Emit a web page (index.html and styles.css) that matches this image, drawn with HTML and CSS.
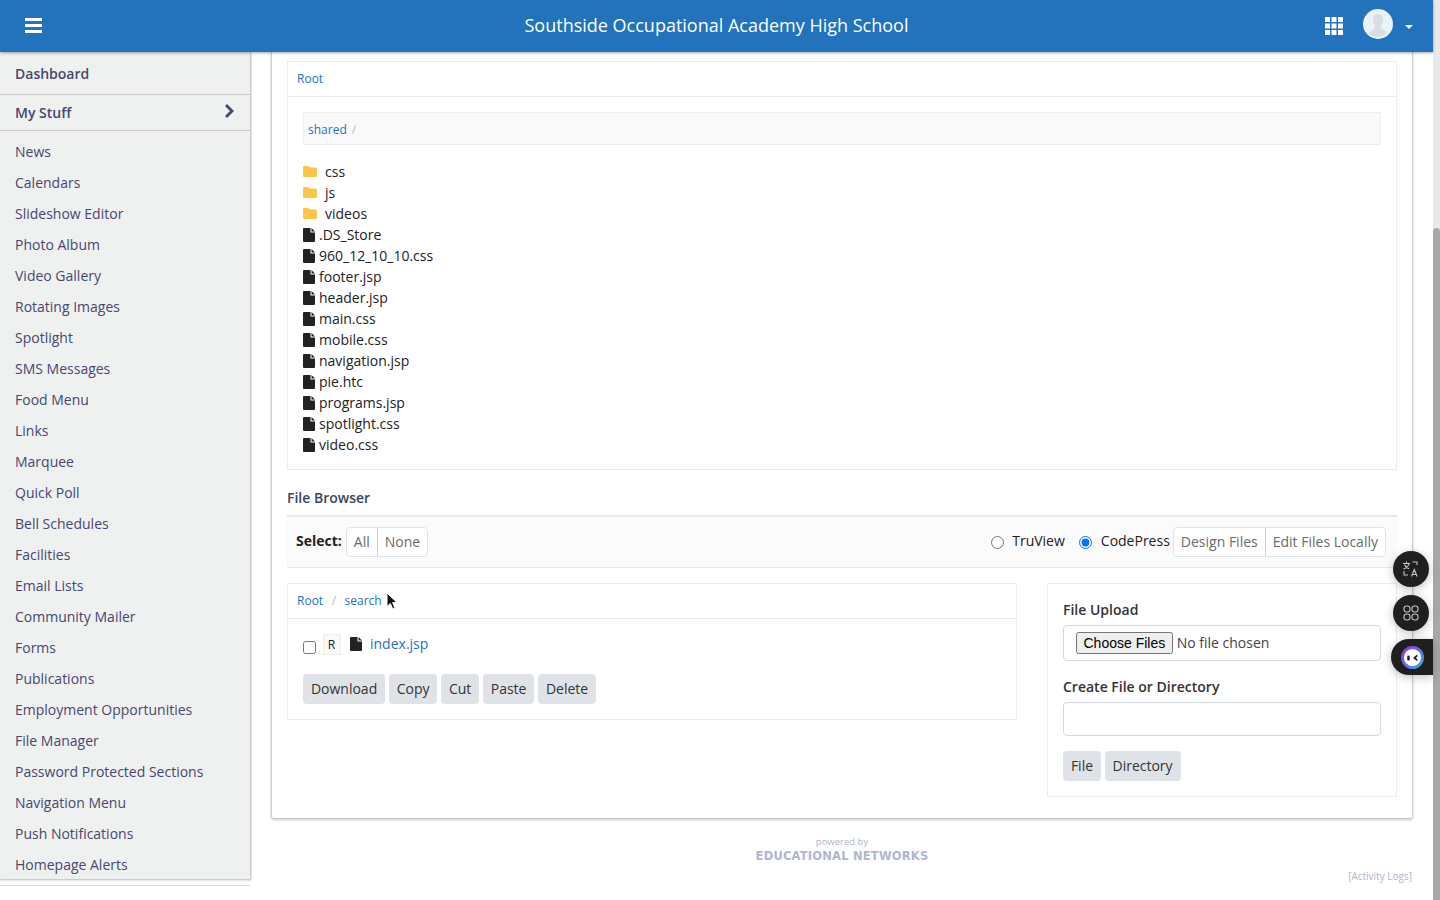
FILE: index.html
```html
<!DOCTYPE html>
<html lang="en">
<head>
  <meta charset="UTF-8" />
  <title>File Manager - Southside Occupational Academy High School</title>
  <link rel="stylesheet" href="styles.css">
</head>
<body>
  <div class="page">
    <header class="topbar">
      <svg class="menu-icon" viewBox="0 0 17 15"><path d="M0 0h17v3H0zM0 6h17v3H0zM0 12h17v3H0z"/></svg>
      <div class="site-title">Southside Occupational Academy High School</div>
      <svg class="apps-icon" viewBox="0 0 18 18"><path d="M0 0h5v5H0zM6.500 0h5v5h-5zM13 0h5v5h-5zM0 6.500h5v5H0zM6.500 6.500h5v5h-5zM13 6.500h5v5h-5zM0 13h5v5H0zM6.500 13h5v5h-5zM13 13h5v5h-5z"/></svg>
      <svg class="avatar" viewBox="0 0 30 30">
        <circle cx="15" cy="15" r="15" fill="#ecf0f7"/>
        <path d="M15 5c3.300 0 5 2.600 5 6 0 2.400-.9 4.400-2 5.600v2c0 1.500 2.500 2.400 5 4 .9.600 1 1.300 1 2A14 14 0 0 1 6 24.600c0-.7.100-1.400 1-2 2.500-1.600 5-2.500 5-4v-2c-1.100-1.200-2-3.200-2-5.600 0-3.400 1.700-6 5-6z" fill="#d9dee6"/>
      </svg>
      <span class="caret"></span>
    </header>

    <div class="layout">
      <div class="side-col">
        <nav class="sidebar">
          <a class="nav-head nav-dash">Dashboard</a>
          <a class="nav-head nav-stuff">My Stuff
            <svg class="chev" viewBox="0 0 9 14"><path d="M2 0l7 7-7 7-2-2 5-5-5-5z"/></svg>
          </a>
          <ul class="nav-list">
            <li>News</li>
            <li>Calendars</li>
            <li>Slideshow Editor</li>
            <li>Photo Album</li>
            <li>Video Gallery</li>
            <li>Rotating Images</li>
            <li>Spotlight</li>
            <li>SMS Messages</li>
            <li>Food Menu</li>
            <li>Links</li>
            <li>Marquee</li>
            <li>Quick Poll</li>
            <li>Bell Schedules</li>
            <li>Facilities</li>
            <li>Email Lists</li>
            <li>Community Mailer</li>
            <li>Forms</li>
            <li>Publications</li>
            <li>Employment Opportunities</li>
            <li>File Manager</li>
            <li>Password Protected Sections</li>
            <li>Navigation Menu</li>
            <li>Push Notifications</li>
            <li>Homepage Alerts</li>
          </ul>
        </nav>
        <div class="side-rule"></div>
      </div>

      <main class="content">
        <section class="panel">
          <div class="box">
            <div class="box-head"><a>Root</a></div>
            <div class="box-body">
              <div class="crumb"><a>shared</a><span class="sep">/</span></div>
              <ul class="files">
                <li class="dir"><svg class="folder" viewBox="0 0 14 11"><path d="M1.300 0h4l1.400 1.600h6c.7 0 1.300.6 1.300 1.300v6.800c0 .7-.6 1.300-1.300 1.300H1.300C.6 11 0 10.400 0 9.700V1.300C0 .6.600 0 1.300 0z"/></svg>css</li>
                <li class="dir"><svg class="folder" viewBox="0 0 14 11"><path d="M1.300 0h4l1.400 1.600h6c.7 0 1.300.6 1.300 1.300v6.800c0 .7-.6 1.300-1.300 1.300H1.300C.6 11 0 10.400 0 9.700V1.300C0 .6.600 0 1.300 0z"/></svg>js</li>
                <li class="dir"><svg class="folder" viewBox="0 0 14 11"><path d="M1.300 0h4l1.400 1.600h6c.7 0 1.300.6 1.300 1.300v6.800c0 .7-.6 1.300-1.300 1.300H1.300C.6 11 0 10.400 0 9.700V1.300C0 .6.600 0 1.300 0z"/></svg>videos</li>
                <li><svg class="file" viewBox="0 0 12 14"><path d="M1 0h6.500v4.500H12V13a1 1 0 0 1-1 1H1a1 1 0 0 1-1-1V1a1 1 0 0 1 1-1zM8.500 0L12 3.500H8.500z"/></svg>.DS_Store</li>
                <li><svg class="file" viewBox="0 0 12 14"><path d="M1 0h6.500v4.500H12V13a1 1 0 0 1-1 1H1a1 1 0 0 1-1-1V1a1 1 0 0 1 1-1zM8.500 0L12 3.500H8.500z"/></svg>960_12_10_10.css</li>
                <li><svg class="file" viewBox="0 0 12 14"><path d="M1 0h6.500v4.500H12V13a1 1 0 0 1-1 1H1a1 1 0 0 1-1-1V1a1 1 0 0 1 1-1zM8.500 0L12 3.500H8.500z"/></svg>footer.jsp</li>
                <li><svg class="file" viewBox="0 0 12 14"><path d="M1 0h6.500v4.500H12V13a1 1 0 0 1-1 1H1a1 1 0 0 1-1-1V1a1 1 0 0 1 1-1zM8.500 0L12 3.500H8.500z"/></svg>header.jsp</li>
                <li><svg class="file" viewBox="0 0 12 14"><path d="M1 0h6.500v4.500H12V13a1 1 0 0 1-1 1H1a1 1 0 0 1-1-1V1a1 1 0 0 1 1-1zM8.500 0L12 3.500H8.500z"/></svg>main.css</li>
                <li><svg class="file" viewBox="0 0 12 14"><path d="M1 0h6.500v4.500H12V13a1 1 0 0 1-1 1H1a1 1 0 0 1-1-1V1a1 1 0 0 1 1-1zM8.500 0L12 3.500H8.500z"/></svg>mobile.css</li>
                <li><svg class="file" viewBox="0 0 12 14"><path d="M1 0h6.500v4.500H12V13a1 1 0 0 1-1 1H1a1 1 0 0 1-1-1V1a1 1 0 0 1 1-1zM8.500 0L12 3.500H8.500z"/></svg>navigation.jsp</li>
                <li><svg class="file" viewBox="0 0 12 14"><path d="M1 0h6.500v4.500H12V13a1 1 0 0 1-1 1H1a1 1 0 0 1-1-1V1a1 1 0 0 1 1-1zM8.500 0L12 3.500H8.500z"/></svg>pie.htc</li>
                <li><svg class="file" viewBox="0 0 12 14"><path d="M1 0h6.500v4.500H12V13a1 1 0 0 1-1 1H1a1 1 0 0 1-1-1V1a1 1 0 0 1 1-1zM8.500 0L12 3.500H8.500z"/></svg>programs.jsp</li>
                <li><svg class="file" viewBox="0 0 12 14"><path d="M1 0h6.500v4.500H12V13a1 1 0 0 1-1 1H1a1 1 0 0 1-1-1V1a1 1 0 0 1 1-1zM8.500 0L12 3.500H8.500z"/></svg>spotlight.css</li>
                <li><svg class="file" viewBox="0 0 12 14"><path d="M1 0h6.500v4.500H12V13a1 1 0 0 1-1 1H1a1 1 0 0 1-1-1V1a1 1 0 0 1 1-1zM8.500 0L12 3.500H8.500z"/></svg>video.css</li>
              </ul>
            </div>
          </div>

          <h4 class="section-title">File Browser</h4>
          <div class="toolbar">
            <div class="tool-left">
              <strong>Select:</strong>
              <div class="btn-group"><a>All</a><a>None</a></div>
            </div>
            <div class="tool-right">
              <label class="radio"><input type="radio" name="editor" />TruView</label>
              <label class="radio"><input type="radio" name="editor" checked />CodePress</label>
              <div class="btn-group"><a>Design Files</a><a>Edit Files Locally</a></div>
            </div>
          </div>

          <div class="browser">
            <div class="box box-files">
              <div class="box-head crumbs">
                <a>Root</a><span class="sep">/</span><a>search</a>
                <svg class="pointer" viewBox="0 0 12 18"><path d="M1 1v13.500l3.300-3 2.300 5.200 2.300-1-2.300-5.100h4.400z" fill="#111" stroke="#fff" stroke-width="1"/></svg>
              </div>
              <div class="box-body">
                <div class="file-row">
                  <input type="checkbox" class="check" />
                  <span class="perm">R</span>
                  <svg class="file" viewBox="0 0 12 14"><path d="M1 0h6.500v4.500H12V13a1 1 0 0 1-1 1H1a1 1 0 0 1-1-1V1a1 1 0 0 1 1-1zM8.500 0L12 3.500H8.500z"/></svg>
                  <a class="file-link">index.jsp</a>
                </div>
                <div class="actions">
                  <button>Download</button>
                  <button>Copy</button>
                  <button>Cut</button>
                  <button>Paste</button>
                  <button>Delete</button>
                </div>
              </div>
            </div>

            <div class="box box-upload">
              <label class="field-label">File Upload</label>
              <input type="file" class="file-input" multiple />
              <label class="field-label second">Create File or Directory</label>
              <input type="text" class="text-input" />
              <div class="actions">
                <button>File</button>
                <button>Directory</button>
              </div>
            </div>
          </div>
        </section>

        <footer class="credits">
          <div class="powered">powered by</div>
          <div class="brand">EDUCATIONAL NETWORKS</div>
          <div class="logs">[Activity Logs]</div>
        </footer>
      </main>
    </div>

    <div class="float-tools">
      <span class="fab">
        <svg viewBox="0 0 18 18" fill="none" stroke="#c4c4c4" stroke-width="1.100">
          <path d="M1 3.500h7M4.500 1.500v2M7 3.500c-.5 2.500-2.500 4.500-5.500 5.500M2.500 4.500c.8 2 2.500 3.500 4.500 4.200M10.500 2h4.500v3M2 11v4h4M9.500 16.500l2.800-7 2.800 7M10.500 14.500h3.600"/>
        </svg>
      </span>
      <span class="fab">
        <svg viewBox="0 0 18 18" fill="none" stroke="#c4c4c4" stroke-width="1.100">
          <rect x="2" y="2" width="6" height="6" rx="2.500"/><rect x="10" y="2" width="6" height="6" rx="2.500"/>
          <rect x="2" y="10" width="6" height="6" rx="2.500"/><rect x="10" y="10" width="6" height="6" rx="2.500"/>
        </svg>
      </span>
      <span class="fab-tab">
        <svg viewBox="0 0 24 24">
          <defs><linearGradient id="ring" x1="0" y1="0" x2="1" y2="1"><stop offset="0" stop-color="#a32bd6"/><stop offset="1" stop-color="#22b4ee"/></linearGradient></defs>
          <circle cx="12" cy="12" r="12" fill="url(#ring)"/>
          <circle cx="12" cy="12" r="9" fill="#fff"/>
          <rect x="6.500" y="10" width="2.600" height="5" rx="1.300" fill="#1c1c2a"/>
          <path d="M17 9.800l-3 2.600 3 2.600" fill="none" stroke="#1c1c2a" stroke-width="1.800"/>
        </svg>
      </span>
    </div>
  </div>

  <div class="scrollbar"><div class="scroll-thumb"></div></div>
</body>
</html>
```

FILE: styles.css
```css
* {
  box-sizing: border-box;
}
html, body {
  height: 900px;
  margin: 0;
  overflow: hidden;
}
body {
  display: flex;
  font-family: "Open Sans", sans-serif;
  font-size: 14px;
  color: #222;
  background: #fff;
}
a {
  color: #2273bc;
  text-decoration: none;
}
ul {
  list-style: none;
  margin: 0;
  padding: 0;
}

/* page frame */
.page {
  position: relative;
  width: 1433px;
  height: 900px;
}
.scrollbar {
  width: 7px;
  height: 900px;
  padding-top: 228px;
  background: #e9e9e9;
}
.scroll-thumb {
  height: 672px;
  background: #a8a8a8;
  border-radius: 4px 4px 0 0;
}

/* top bar */
.topbar {
  position: relative;
  z-index: 3;
  display: flex;
  align-items: center;
  height: 52px;
  padding-left: 25px;
  background: #2273bc;
  box-shadow: 0 1px 3px rgba(0, 0, 0, 0.35);
}
.menu-icon {
  width: 17px;
  height: 15px;
  margin-top: -1px;
  fill: #fff;
}
.site-title {
  position: absolute;
  left: 0;
  right: 0;
  top: 12px;
  text-align: center;
  font-size: 18px;
  line-height: 27px;
  color: #fff;
}
.apps-icon {
  width: 18px;
  height: 18px;
  margin-left: auto;
  fill: #fff;
}
.avatar {
  width: 30px;
  height: 30px;
  margin-left: 20px;
  margin-top: -4px;
}
.caret {
  width: 0;
  height: 0;
  margin: 2px 20px 0 12px;
  border-left: 4.500px solid transparent;
  border-right: 4.500px solid transparent;
  border-top: 4px solid #fff;
}

/* main columns */
.layout {
  display: flex;
  height: 848px;
}
.side-col {
  width: 251px;
  flex-shrink: 0;
}
.sidebar {
  height: 827px;
  overflow: hidden;
  background: #eff1f1;
  border-right: 1px solid #ccc;
  box-shadow: 0 1px 2px rgba(0, 0, 0, 0.3);
  color: #47476e;
}
.side-rule {
  width: 250px;
  height: 1px;
  margin-top: 6px;
  background: #ddd;
}
.nav-head {
  display: flex;
  align-items: center;
  justify-content: space-between;
  padding: 0 15px;
  font-weight: 600;
  color: #47476e;
  border-bottom: 1px solid #c9c9c9;
}
.nav-dash {
  height: 43px;
}
.nav-stuff {
  height: 36px;
}
.chev {
  width: 9px;
  height: 14px;
  margin-right: 1px;
  margin-top: -3px;
  fill: #47476e;
}
.nav-list {
  padding-top: 5px;
}
.nav-list li {
  height: 31px;
  line-height: 31px;
  padding-left: 15px;
}

.content {
  width: 1142px;
  margin-left: 20px;
  flex-shrink: 0;
}
.panel {
  height: 767px;
  padding: 9px 15px 0;
  border-left: 1px solid #ccc;
  border-right: 1px solid #ccc;
  border-bottom: 1px solid #c4c4c4;
  border-radius: 0 0 3px 3px;
  box-shadow: 0 1px 3px rgba(0, 0, 0, 0.2);
}

/* boxes */
.box {
  border: 1px solid #e9edf2;
}
.box-head {
  display: flex;
  align-items: center;
  height: 35px;
  padding: 0 0 2px 9px;
  font-size: 12px;
  border-bottom: 1px solid #e9edf2;
}
.box-body {
  padding: 15px;
}
.crumb {
  display: flex;
  align-items: center;
  height: 33px;
  padding: 2px 0 0 4px;
  font-size: 12px;
  background: #f9f9f9;
  border: 1px solid #eee;
}
.sep {
  margin-left: 5px;
  color: #bbb;
}
.files {
  margin-top: 16px;
  margin-bottom: -1px;
}
.files li {
  display: flex;
  align-items: center;
  height: 21px;
}
.folder {
  width: 14px;
  height: 11px;
  margin-right: 8px;
  fill: #fbc64a;
}
.file {
  width: 12px;
  height: 14px;
  margin-right: 4px;
  fill: #222;
}

/* toolbar */
.section-title {
  margin: 18px 0 7px;
  font-size: 14px;
  line-height: 20px;
  font-weight: 600;
  color: #34495e;
}
.toolbar {
  display: flex;
  align-items: center;
  justify-content: space-between;
  height: 53px;
  padding: 0 11px 0 9px;
  background: #fbfbfb;
  border-top: 2px solid #e8e8e8;
  border-bottom: 1px solid #e8e8e8;
}
.tool-left, .tool-right {
  display: flex;
  align-items: center;
}
.tool-left strong {
  margin-right: 4px;
  margin-top: -3px;
}
.btn-group {
  display: flex;
  height: 30px;
  background: #fff;
  border: 1px solid #dfe3e8;
  border-radius: 4px;
}
.btn-group a {
  padding: 0 7px;
  line-height: 28px;
  color: #6b6b6b;
}
.btn-group a + a {
  border-left: 1px solid #cfd4da;
}
.radio {
  display: flex;
  align-items: center;
  margin-right: 3px;
  margin-top: -4px;
}
.radio input {
  width: 13px;
  height: 13px;
  margin: 4px 9px 0 0;
}
.radio:first-child input {
  margin-right: 8px;
}
.radio + .radio {
  margin-left: 11px;
}

/* file browser */
.browser {
  display: flex;
  justify-content: space-between;
  align-items: flex-start;
  margin-top: 15px;
}
.box-files {
  width: 730px;
}
.crumbs .sep {
  margin: 0 8.500px;
}
.pointer {
  position: absolute;
  width: 12px;
  height: 18px;
  margin-left: 89px;
  margin-top: 2px;
}
.file-row {
  display: flex;
  align-items: flex-start;
  height: 25px;
}
.check {
  width: 13px;
  height: 13px;
  margin: 7px 7px 0 0;
}
.perm {
  width: 18px;
  height: 21px;
  margin-right: 9px;
  padding-right: 1px;
  text-align: center;
  font-size: 12px;
  line-height: 19px;
  background: #f9f9f9;
  border: 1px solid #eee;
}
.file-row .file {
  margin: 3px 8px 0 0;
}
.file-link {
  font-size: 14px;
  line-height: 20px;
}
.actions {
  margin-top: 15px;
  font-size: 14px;
}
button {
  height: 30px;
  padding: 0 7.900px 2px;
  font-family: "Open Sans", sans-serif;
  font-size: 14px;
  color: #333;
  background: #dfe3e8;
  border: none;
  border-radius: 4px;
}
.box-upload {
  width: 350px;
  height: 214px;
  padding: 16px 15px 0;
}
.field-label {
  display: block;
  font-weight: 600;
  line-height: 20px;
  color: #333;
}
.second {
  margin-top: 16px;
}
.file-input, .text-input {
  display: block;
  width: 318px;
  margin-top: 5px;
  font-family: "Open Sans", sans-serif;
  font-size: 14px;
  color: #444;
  background: #fff;
  border: 1px solid #d3d9e3;
  border-radius: 4px;
}
.file-input {
  height: 36px;
  padding: 6px 12px;
}
.file-input::file-selector-button {
  height: 22px;
  margin-right: 4px;
  padding: 0 5.500px;
  font-family: "Liberation Sans", sans-serif;
  font-size: 14px;
}
.text-input {
  height: 34px;
}

/* footer */
.credits {
  position: relative;
  padding-top: 17px;
  text-align: center;
}
.powered {
  font-size: 9.500px;
  line-height: 12px;
  color: #aeb3cd;
}
.brand {
  font-family: "DejaVu Sans", sans-serif;
  font-weight: 700;
  font-size: 11.500px;
  letter-spacing: 0.2px;
  line-height: 16px;
  color: #b0b6cf;
}
.logs {
  margin-top: 5px;
  padding-right: 1px;
  text-align: right;
  font-size: 10px;
  color: #aeb3cd;
}

/* floating widgets over the page */
.float-tools {
  position: absolute;
  top: 551px;
  right: 0;
  display: flex;
  flex-direction: column;
  align-items: flex-end;
  gap: 8px;
}
.fab {
  display: flex;
  align-items: center;
  justify-content: center;
  width: 36px;
  height: 36px;
  margin-right: 4px;
  background: #1f1f1f;
  border-radius: 50%;
  box-shadow: 0 2px 10px rgba(0, 0, 0, 0.25);
}
.fab svg {
  width: 18px;
  height: 18px;
}
.fab-tab {
  display: flex;
  align-items: center;
  width: 42px;
  height: 36px;
  padding-left: 9.500px;
  background: #1f1f1f;
  border-radius: 18px 0 0 18px;
  box-shadow: 0 2px 10px rgba(0, 0, 0, 0.25);
}
.fab-tab svg {
  width: 23px;
  height: 23px;
}
```
